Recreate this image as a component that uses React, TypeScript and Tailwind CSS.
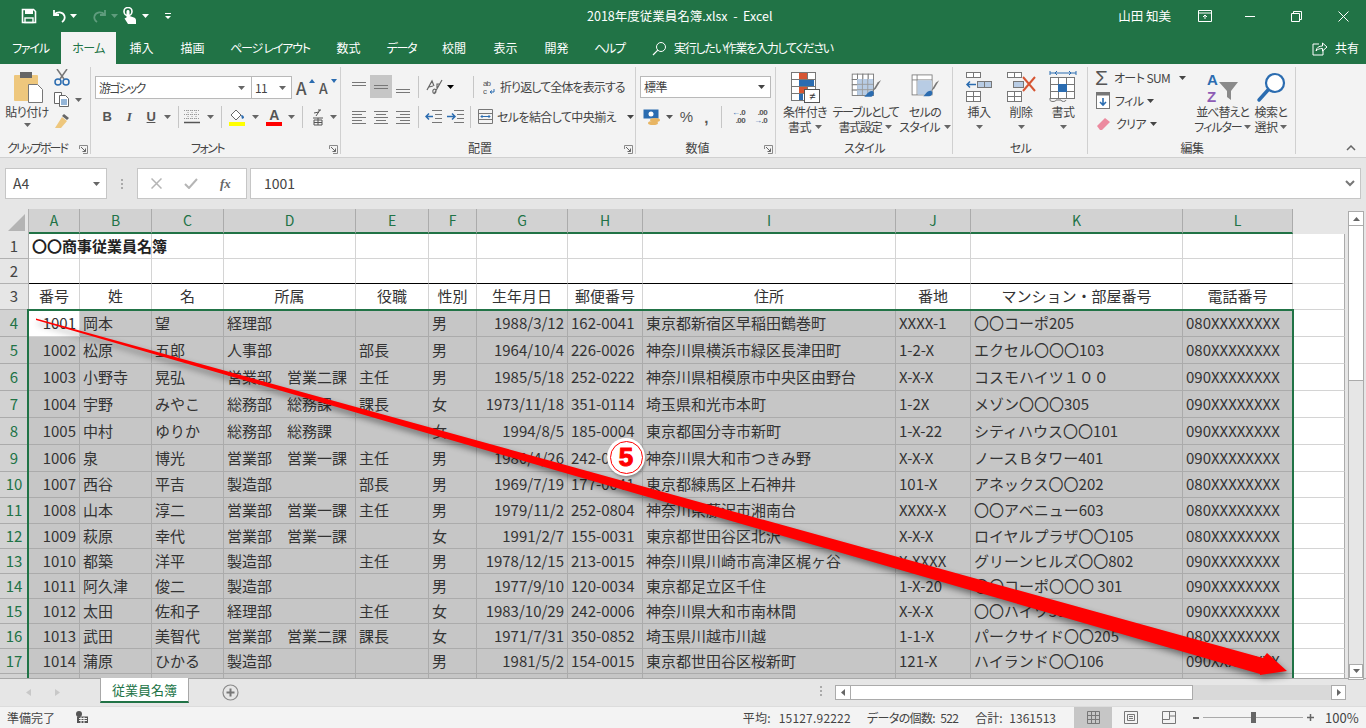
import React from 'react';

const jp = '[font-family:"Noto_Sans_CJK_JP","Noto_Sans",sans-serif]';

const columns = [
  { id: 'A', label: '番号' },
  { id: 'B', label: '姓' },
  { id: 'C', label: '名' },
  { id: 'D', label: '所属' },
  { id: 'E', label: '役職' },
  { id: 'F', label: '性別' },
  { id: 'G', label: '生年月日' },
  { id: 'H', label: '郵便番号' },
  { id: 'I', label: '住所' },
  { id: 'J', label: '番地' },
  { id: 'K', label: 'マンション・部屋番号' },
  { id: 'L', label: '電話番号' },
];

const gridCols = 'grid grid-cols-[29px_51px_72px_72px_132px_73px_48px_91px_75px_253px_75px_212px_110px_52px]';

const people = [
  ['1001', '岡本', '望', '経理部', '', '男', '1988/3/12', '162-0041', '東京都新宿区早稲田鶴巻町', 'XXXX-1', '〇〇コーポ205', '080XXXXXXXX'],
  ['1002', '松原', '五郎', '人事部', '部長', '男', '1964/10/4', '226-0026', '神奈川県横浜市緑区長津田町', '1-2-X', 'エクセル〇〇〇103', '080XXXXXXXX'],
  ['1003', '小野寺', '晃弘', '営業部　営業二課', '主任', '男', '1985/5/18', '252-0222', '神奈川県相模原市中央区由野台', 'X-X-X', 'コスモハイツ１００', '090XXXXXXXX'],
  ['1004', '宇野', 'みやこ', '総務部　総務課', '課長', '女', '1973/11/18', '351-0114', '埼玉県和光市本町', '1-2X', 'メゾン〇〇〇305', '090XXXXXXXX'],
  ['1005', '中村', 'ゆりか', '総務部　総務課', '', '女', '1994/8/5', '185-0004', '東京都国分寺市新町', '1-X-22', 'シティハウス〇〇101', '090XXXXXXXX'],
  ['1006', '泉', '博光', '営業部　営業一課', '主任', '男', '1980/4/26', '242-0002', '神奈川県大和市つきみ野', 'X-X-X', 'ノースＢタワー401', '090XXXXXXXX'],
  ['1007', '西谷', '平吉', '製造部', '部長', '男', '1969/7/19', '177-0041', '東京都練馬区上石神井', '101-X', 'アネックス〇〇202', '080XXXXXXXX'],
  ['1008', '山本', '淳二', '営業部　営業一課', '主任', '男', '1979/11/2', '252-0804', '神奈川県藤沢市湘南台', 'XXXX-X', '〇〇アベニュー603', '080XXXXXXXX'],
  ['1009', '萩原', '幸代', '営業部　営業一課', '', '女', '1991/2/7', '155-0031', '東京都世田谷区北沢', 'X-X-X', 'ロイヤルプラザ〇〇105', '080XXXXXXXX'],
  ['1010', '都築', '洋平', '製造部', '主任', '男', '1978/12/15', '213-0015', '神奈川県川崎市高津区梶ヶ谷', 'X-XXXX', 'グリーンヒルズ〇〇802', '090XXXXXXXX'],
  ['1011', '阿久津', '俊二', '製造部', '', '男', '1977/9/10', '120-0034', '東京都足立区千住', '1-X-20', '〇〇コーポ〇〇〇 301', '090XXXXXXXX'],
  ['1012', '太田', '佐和子', '経理部', '主任', '女', '1983/10/29', '242-0006', '神奈川県大和市南林間', 'X-X-X', '〇〇ハイツ305', '090XXXXXXXX'],
  ['1013', '武田', '美智代', '営業部　営業二課', '課長', '女', '1971/7/31', '350-0852', '埼玉県川越市川越', '1-1-X', 'パークサイド〇〇205', '080XXXXXXXX'],
  ['1014', '蒲原', 'ひかる', '製造部', '', '男', '1981/5/2', '154-0015', '東京都世田谷区桜新町', '121-X', 'ハイランド〇〇106', '090XXXXXXXX'],
];

const rowHeights = ['h-[27px]', 'h-[27px]', 'h-[27px]', 'h-[27px]', 'h-[27px]', 'h-[27px]', 'h-[26px]', 'h-[26px]', 'h-[25px]', 'h-[25px]', 'h-[25px]', 'h-[25px]', 'h-[25px]', 'h-[25px]'];

const tabs = [
  ['ファイル', 'w-[61px] tracking-[-1.2px]'],
  ['ホーム', 'w-[55px] tracking-[-0.6px]'],
  ['挿入', 'w-[51px]'],
  ['描画', 'w-[51px]'],
  ['ページ レイアウト', 'w-[104px] tracking-[-1.2px]'],
  ['数式', 'w-[53px]'],
  ['データ', 'w-[53px] tracking-[-1.2px]'],
  ['校閲', 'w-[52px]'],
  ['表示', 'w-[51px]'],
  ['開発', 'w-[51px]'],
  ['ヘルプ', 'w-[55px] tracking-[-1.2px]'],
];

const Caret = ({ className = 'text-[#666]' }: { className?: string }) => (
  <svg width="7" height="4" viewBox="0 0 7 4" className={`shrink-0 ${className}`}>
    <path d="M0 0h7L3.5 4z" fill="currentColor" />
  </svg>
);

const Launcher = () => (
  <svg width="9" height="9" viewBox="0 0 9 9" className="absolute right-[3px] bottom-[3px]">
    <path d="M.5 4V.5H8.5V8.5H4" fill="none" stroke="#8a8a8a" />
    <path d="M2 2l4.5 4.5M6.5 3.5v3h-3" fill="none" stroke="#666" />
  </svg>
);

type GroupProps = { width: string; label: string; labelClass?: string; launcher?: boolean; children: React.ReactNode };

const Group = ({ width, label, labelClass = '', launcher = false, children }: GroupProps) => (
  <div className={`relative shrink-0 ${width} flex flex-col`}>
    <div className="h-[75px]">{children}</div>
    <div className={`h-[18px] text-center text-[12px] leading-[18px] text-[#444] ${launcher ? 'pr-[17px]' : ''} ${labelClass}`}>{label}</div>
    {launcher && <Launcher />}
    <div className="absolute right-0 top-[3px] bottom-[3px] w-px bg-[#d0d0d0]" />
  </div>
);

const Sep = ({ className = '' }: { className?: string }) => <div className={`w-px h-[22px] bg-[#c6c6c6] shrink-0 ${className}`} />;

const Lines = ({ rows, active = false }: { rows: [number, number][]; active?: boolean }) => (
  <svg width="16" height="16" viewBox="0 0 16 16">
    {rows.map(([y, w], i) => (
      <rect key={i} x={active ? 8 - w / 2 : 1} y={y} width={w} height="1" fill="#777" />
    ))}
  </svg>
);

const CellGrid = ({ x, y, cols, rows, w, h }: { x: number; y: number; cols: number; rows: number; w: number; h: number }) => (
  <g fill="none" stroke="#777">
    {Array.from({ length: rows }).map((_, r) =>
      Array.from({ length: cols }).map((_, c) => (
        <rect key={`${r}-${c}`} x={x + c * w + 0.5} y={y + r * h + 0.5} width={w} height={h} fill="#fff" />
      ))
    )}
  </g>
);

type BigButtonProps = { width: string; lines: string[]; caretInline?: boolean; tight?: boolean; icon: React.ReactNode };

const BigButton = ({ width, lines, caretInline = true, tight = false, icon }: BigButtonProps) => (
  <div className={`${width} flex flex-col items-center shrink-0`}>
    <div className="h-[34px] mt-[6px] flex items-center justify-center">{icon}</div>
    <div className={`text-[12px] leading-[15px] text-[#444] text-center whitespace-nowrap ${tight ? 'tracking-[-1.3px]' : ''}`}>
      <div>{lines[0]}</div>
      {caretInline ? (
        <div className="flex items-center justify-center gap-[4px]">
          {lines[1]}
          <Caret />
        </div>
      ) : (
        <div className="flex justify-center h-[15px] items-center">
          <Caret />
        </div>
      )}
    </div>
  </div>
);

function TitleBar() {
  return (
    <div className="h-[32px] bg-[#217346] flex items-center text-white relative">
      <div className="flex items-center pl-[21px] gap-0">
        <svg width="16" height="16" viewBox="0 0 16 16" className="mr-[14px]">
          <path d="M1.5 1.5h11l2 2v11h-13z" fill="none" stroke="#fff" strokeWidth="1.6" />
          <rect x="4" y="2" width="8" height="4" fill="#fff" />
          <rect x="4" y="10" width="8" height="4.5" fill="none" stroke="#fff" strokeWidth="1.4" />
        </svg>
        <svg width="16" height="16" viewBox="0 0 16 16" className="mr-[3px]">
          <path d="M3 2v5h5M3.5 6.5C6 3.500 12 3.500 13.500 8c.7 2.500-.5 4.500-2.500 6" fill="none" stroke="#fff" strokeWidth="1.8" />
        </svg>
        <Caret className="text-white mr-[15px]" />
        <svg width="16" height="16" viewBox="0 0 16 16" className="mr-[3px]">
          <path d="M13 2v5H8M12.500 6.500C10 3.500 4 3.500 2.500 8c-.7 2.500.5 4.500 2.500 6" fill="none" stroke="#5f9c7d" strokeWidth="1.8" />
        </svg>
        <Caret className="text-[#5f9c7d] mr-[5px]" />
        <svg width="14" height="18" viewBox="0 0 14 18" className="mr-[5px]">
          <circle cx="5" cy="4.500" r="4" fill="none" stroke="#fff" strokeWidth="1.6" />
          <path d="M3.500 4.500c0-2 3-2 3 0v4.500l4.500 1.500c1.500.5 2 1.500 2 3V17H5L1.500 11.500 3.500 10.500z" fill="#fff" />
        </svg>
        <Caret className="text-white mr-[15px]" />
        <svg width="8" height="8" viewBox="0 0 8 8">
          <path d="M1 1h6v1H1zM1 4h6L4 7z" fill="#fff" />
        </svg>
      </div>
      <div className="absolute left-[587px] top-[7px] text-[12.5px] leading-[18px] whitespace-pre">2018年度従業員名簿.xlsx  -  Excel</div>
      <div className="ml-auto flex items-center">
        <span className="text-[12.5px] mr-[27px]">山田 知美</span>
        <svg width="14" height="12" viewBox="0 0 14 12" className="mr-[33px]">
          <path d="M.5.500h13v11H.5zM.5 3h13" fill="none" stroke="#fff" />
          <path d="M7 9V5M5 7l2-2 2 2" fill="none" stroke="#fff" />
        </svg>
        <div className="w-[10px] h-px bg-white mr-[36px]" />
        <svg width="11" height="11" viewBox="0 0 11 11" className="mr-[36px]">
          <path d="M.5 2.500h8v8h-8zM2.500 2.500v-2h8v8h-2" fill="none" stroke="#fff" />
        </svg>
        <svg width="11" height="11" viewBox="0 0 11 11" className="mr-[17px]">
          <path d="M.5.500l10 10M10.500.500l-10 10" fill="none" stroke="#fff" />
        </svg>
      </div>
    </div>
  );
}

function TabBar() {
  return (
    <div className="h-[32px] bg-[#217346] flex items-stretch text-white text-[12px] relative">
      {tabs.map(([label, width], i) => (
        <div
          key={label}
          className={`${width} shrink-0 flex items-center justify-center ${i === 1 ? 'bg-[#f3f3f3] text-[#217346]' : ''}`}
        >
          {label}
        </div>
      ))}
      <div className="flex items-center ml-[15px] gap-[7px]">
        <svg width="15" height="15" viewBox="0 0 15 15">
          <circle cx="9" cy="6" r="4.500" fill="none" stroke="#fff" />
          <path d="M5.800 9.200 1 14" stroke="#fff" strokeWidth="1.200" />
        </svg>
        <span className="tracking-[-1.25px]">実行したい作業を入力してください</span>
      </div>
      <div className="ml-auto flex items-center pr-[7px] gap-[7px]">
        <svg width="16" height="15" viewBox="0 0 16 15">
          <path d="M7 3H1v11h10V9" fill="none" stroke="#fff" />
          <path d="M4 10c.5-3.500 3-5 6.500-5V2L15 6l-4.500 4V7.500C8 7.500 5.500 8 4 10z" fill="none" stroke="#fff" />
        </svg>
        <span>共有</span>
      </div>
    </div>
  );
}

function FontGroup() {
  return (
    <div className="pl-[4px] pt-[12px]">
      <div className="flex items-center">
        <div className="w-[157px] h-[23px] bg-white border border-[#b9b9b9] flex items-center justify-between px-[3px] text-[12px] text-[#444]">
          <span className="tracking-[-1.8px]">游ゴシック</span>
          <Caret className="text-[#666] mr-[3px]" />
        </div>
        <div className="w-[40px] h-[23px] bg-white border-y border-r border-[#b9b9b9] flex items-center justify-between pl-[3px] pr-[5px] text-[12px] text-[#444]">
          11
          <Caret />
        </div>
        <div className="relative ml-[4px] w-[20px] text-[17px] leading-[20px] text-[#555] font-medium">
          A
          <svg width="6" height="4" viewBox="0 0 6 4" className="absolute right-[1px] top-[1px]"><path d="M0 4h6L3 0z" fill="#2b6cb0" /></svg>
        </div>
        <div className="relative ml-[3px] w-[18px] text-[14px] leading-[20px] text-[#555] font-medium">
          A
          <svg width="6" height="4" viewBox="0 0 6 4" className="absolute right-[0px] top-[1px]"><path d="M0 0h6L3 4z" fill="#2b6cb0" /></svg>
        </div>
      </div>
      <div className="flex items-center mt-[7px] h-[22px] text-[#555]">
        <span className="w-[22px] ml-[1px] text-center font-bold text-[13px] [font-family:'Liberation_Sans',sans-serif]">B</span>
        <span className="w-[22px] text-center italic font-bold text-[13px] [font-family:'Liberation_Serif',serif]">I</span>
        <span className="w-[22px] text-center underline font-bold text-[13px] [font-family:'Liberation_Sans',sans-serif]">U</span>
        <Caret className="ml-[2px] text-[#666]" />
        <Sep className="ml-[7px]" />
        <svg width="16" height="14" viewBox="0 0 16 14" className="ml-[5px]">
          <path d="M0 .500h16M0 4.500h16M0 8.500h16" stroke="#999" strokeDasharray="1 1" />
          <path d="M4 0v9M8 0v9M12 0v9" stroke="#999" strokeDasharray="1 1" />
          <path d="M0 12.500h16" stroke="#555" strokeWidth="1.500" />
        </svg>
        <Caret className="ml-[7px] text-[#666]" />
        <Sep className="ml-[7px]" />
        <svg width="18" height="17" viewBox="0 0 18 17" className="ml-[6px]">
          <path d="M3 6l5-5 5 5-5 5z" fill="#fff" stroke="#666" />
          <path d="M13 6c2 0 3 1 3 3l-2 1z" fill="#2b6cb0" />
          <rect x="1" y="13" width="16" height="4" fill="#ffff00" />
        </svg>
        <Caret className="ml-[6px] text-[#666]" />
        <div className="ml-[7px] w-[16px] flex flex-col items-center">
          <span className="text-[14px] leading-[13px] font-bold text-[#555] [font-family:'Liberation_Sans',sans-serif]">A</span>
          <div className="w-[16px] h-[4px] bg-[#ff0000]" />
        </div>
        <Caret className="ml-[6px] text-[#666]" />
        <Sep className="ml-[7px]" />
        <svg width="12" height="17" viewBox="0 0 12 17" className="ml-[9px]">
          <path d="M2 4l5-1M6 1l3 0M8 1L4 7" fill="none" stroke="#555" />
          <path d="M1 9h10M2 11h8v5H2zM6 9v7M2 13.500h8" fill="none" stroke="#555" />
        </svg>
        <Caret className="ml-[6px] text-[#666]" />
      </div>
    </div>
  );
}

function AlignGroup() {
  return (
    <div className="pl-[7px] pt-[11px]">
      <div className="flex items-center h-[23px]">
        <div className="w-[22px] h-[23px] flex items-center justify-center"><Lines rows={[[3, 14], [6, 14]]} /></div>
        <div className="w-[22px] h-[23px] flex items-center justify-center bg-[#c6c6c6]"><Lines rows={[[6, 14], [9, 14]]} /></div>
        <div className="w-[22px] h-[23px] flex items-center justify-center"><Lines rows={[[10, 14], [13, 14]]} /></div>
        <Sep className="ml-[4px]" />
        <svg width="18" height="18" viewBox="0 0 18 18" className="ml-[7px]">
          <path d="M1 12L6 3l2 5M3 9l4-1M7 14c-1-3 3-4 3-1s-3 3-3 1M11 10V6h3M16 2L8 16" fill="none" stroke="#666" strokeWidth="1.200" />
        </svg>
        <Caret className="ml-[3px]" />
        <Sep className="ml-[19px]" />
        <div className="flex items-center ml-[9px] gap-[2px] text-[12px] text-[#444] whitespace-nowrap tracking-[-0.9px]">
          <svg width="15" height="16" viewBox="0 0 15 16" className="shrink-0">
            <text x="0" y="7" fontSize="8" fill="#555" fontFamily="Liberation Sans">ab</text>
            <text x="0" y="15" fontSize="8" fill="#555" fontFamily="Liberation Sans">c</text>
            <path d="M11 10v3H7M9 11.500 7 13l2 1.500" fill="none" stroke="#2b6cb0" />
          </svg>
          折り返して全体を表示する
        </div>
      </div>
      <div className="flex items-center h-[23px] mt-[7px]">
        <div className="w-[22px] flex justify-center"><Lines rows={[[2, 14], [5, 10], [8, 14], [11, 10], [14, 14]]} /></div>
        <div className="w-[22px] flex justify-center"><Lines active rows={[[2, 14], [5, 10], [8, 14], [11, 10], [14, 14]]} /></div>
        <div className="w-[22px] flex justify-center">
          <svg width="16" height="16" viewBox="0 0 16 16">
            {[[2, 14], [5, 10], [8, 14], [11, 10], [14, 14]].map(([y, w]) => <rect key={y} x={15 - w} y={y} width={w} height="1" fill="#777" />)}
          </svg>
        </div>
        <Sep className="ml-[4px]" />
        <svg width="17" height="14" viewBox="0 0 17 14" className="ml-[6px]">
          <path d="M7 .500h10M10 4.500h7M10 8.500h7M7 12.500h10" stroke="#777" />
          <path d="M8 6.500H1M4 3.500l-3 3 3 3" fill="none" stroke="#2b6cb0" strokeWidth="1.500" />
        </svg>
        <svg width="17" height="14" viewBox="0 0 17 14" className="ml-[5px]">
          <path d="M7 .500h10M10 4.500h7M10 8.500h7M7 12.500h10" stroke="#777" />
          <path d="M0 6.500h7M5 3.500l3 3-3 3" fill="none" stroke="#2b6cb0" strokeWidth="1.500" />
        </svg>
        <Sep className="ml-[6px]" />
        <div className="flex items-center ml-[7px] gap-[4px] text-[12px] text-[#444] whitespace-nowrap">
          <svg width="15" height="15" viewBox="0 0 15 15" className="shrink-0">
            <path d="M.5.500h14v14H.5zM.5 4.500h14M.5 10.500h14" fill="none" stroke="#777" />
            <path d="M3 7.500h9M4.500 6 3 7.500 4.500 9M10.500 6 12 7.500 10.500 9" fill="none" stroke="#2b6cb0" />
          </svg>
          セルを結合して中央揃え
          <Caret className="ml-[7px]" />
        </div>
      </div>
    </div>
  );
}

function NumberGroup() {
  return (
    <div className="pl-[4px] pt-[12px]">
      <div className="w-[131px] h-[22px] bg-white border border-[#b9b9b9] flex items-center justify-between px-[3px] text-[12px] text-[#444]">
        標準
        <Caret className="mr-[2px]" />
      </div>
      <div className="flex items-center h-[24px] mt-[7px] text-[#555]">
        <svg width="18" height="16" viewBox="0 0 18 16" className="ml-[3px]">
          <rect x=".5" y=".5" width="15" height="9" fill="#2b6cb0" />
          <circle cx="8" cy="5" r="2.500" fill="#fff" />
          <ellipse cx="12" cy="11" rx="5" ry="2" fill="#e8b563" />
          <ellipse cx="10" cy="14" rx="5" ry="2" fill="#e8b563" />
        </svg>
        <Caret className="ml-[5px]" />
        <span className="ml-[5px] w-[16px] text-[15px] font-medium text-center [font-family:'Liberation_Sans',sans-serif]">%</span>
        <span className="ml-[8px] w-[8px] text-[15px] font-bold leading-[15px] text-center [font-family:'Liberation_Sans',sans-serif]">,</span>
        <Sep className="ml-[11px]" />
        <div className="ml-[7px] w-[16px] text-[8px] leading-[8px] font-bold [font-family:'Liberation_Sans',sans-serif] text-right">
          <div><span className="text-[#2b6cb0]">←</span>.0</div>
          <div>.00</div>
        </div>
        <div className="ml-[6px] w-[16px] text-[8px] leading-[8px] font-bold [font-family:'Liberation_Sans',sans-serif] text-right">
          <div>.00</div>
          <div><span className="text-[#2b6cb0]">→</span>.0</div>
        </div>
      </div>
    </div>
  );
}

const Brush = ({ color }: { color: string }) => (
  <g>
    <path d="M31 12l4-3-6 10-4 3z" fill="#777" />
    <path d="M18 26c3-4 6-5 8-4 2 2 0 6-3 6h-7z" fill={color} />
  </g>
);

const CondIcon = (
  <svg width="30" height="32" viewBox="0 0 30 32">
    <CellGrid x={1} y={1} cols={3} rows={4} w={8} h={7} />
    <rect x="9" y="2" width="8" height="6" fill="#d65532" />
    <rect x="9" y="9" width="15" height="6" fill="#2b6cb0" />
    <rect x="9" y="16" width="8" height="6" fill="#d65532" />
    <rect x="9" y="23" width="4" height="6" fill="#2b6cb0" />
    <rect x="14.500" y="18.500" width="15" height="13" fill="#fff" stroke="#555" />
    <text x="22" y="29" fontSize="11" textAnchor="middle" fill="#333" fontFamily="Liberation Sans">≠</text>
  </svg>
);

const TableIcon = (
  <svg width="32" height="34" viewBox="0 0 36 34">
    <CellGrid x={2} y={2} cols={4} rows={4} w={6} h={6} />
    <rect x="8" y="8" width="18" height="18" fill="#b8cce4" />
    <path d="M8 14h18M8 20h18M14 8v18M20 8v18" stroke="#9a9a9a" />
    <Brush color="#2b6cb0" />
  </svg>
);

const StyleIcon = (
  <svg width="30" height="34" viewBox="0 0 36 34">
    <rect x="2.500" y="2.500" width="24" height="24" fill="#fff" stroke="#777" />
    <path d="M8.500 2.500v24M2.500 8.500h24" stroke="#777" />
    <rect x="9" y="9" width="17" height="17" fill="#b8cce4" />
    <Brush color="#2b6cb0" />
  </svg>
);

const InsertIcon = (
  <svg width="28" height="32" viewBox="0 0 28 32">
    <CellGrid x={1} y={1} cols={2} rows={1} w={7} h={5} />
    <rect x="12.500" y="10.500" width="7" height="6" fill="#b8cce4" stroke="#777" />
    <rect x="19.500" y="10.500" width="7" height="6" fill="#b8cce4" stroke="#777" />
    <path d="M11 13.500H2M5 10.500l-3 3 3 3" fill="none" stroke="#2b6cb0" strokeWidth="1.500" />
    <CellGrid x={1} y={20} cols={2} rows={2} w={7} h={5} />
  </svg>
);

const DeleteIcon = (
  <svg width="30" height="32" viewBox="0 0 30 32">
    <CellGrid x={1} y={1} cols={2} rows={1} w={7} h={5} />
    <rect x="7.500" y="10.500" width="10" height="6" fill="#b8cce4" stroke="#777" />
    <CellGrid x={1} y={20} cols={2} rows={2} w={7} h={5} />
    <path d="M17 6l12 14M29 6L17 20" stroke="#d65532" strokeWidth="2" />
  </svg>
);

const FormatIcon = (
  <svg width="28" height="34" viewBox="0 0 28 34">
    <path d="M1 3h26M1 1v4M27 1v4M6 3l2-2M6 3l2 2M22 3l-2-2M22 3l-2 2" fill="none" stroke="#2b6cb0" />
    <CellGrid x={1} y={7} cols={3} rows={3} w={8} h={7} />
    <rect x="9" y="14" width="9" height="8" fill="#2b6cb0" />
    <path d="M1 28v2c0 2 6 2 6 0l5 0c0 2 5 2 5 0" fill="none" stroke="#777" />
  </svg>
);

function EditGroup() {
  const small = 'flex items-center text-[12px] text-[#444] whitespace-nowrap';
  return (
    <div className="flex pt-[4px]">
      <div className="w-[106px] pl-[7px] flex flex-col gap-[4px]">
        <div className={`${small} h-[19px]`}>
          <span className="text-[21px] leading-[19px] w-[18px] text-[#555] [font-family:'Liberation_Sans',sans-serif]">Σ</span>
          <span className="ml-[1px]">オート SUM</span>
          <Caret className="ml-[9px]" />
        </div>
        <div className={`${small} h-[19px]`}>
          <svg width="14" height="17" viewBox="0 0 14 17" className="mr-[5px] ml-[1px]">
            <rect x=".5" y=".5" width="13" height="16" fill="#fff" stroke="#777" />
            <rect x=".5" y=".5" width="13" height="3" fill="#777" />
            <path d="M7 6v7M4 10l3 3 3-3" fill="none" stroke="#2b6cb0" strokeWidth="1.600" />
          </svg>
          フィル
          <Caret className="ml-[4px]" />
        </div>
        <div className={`${small} h-[19px]`}>
          <svg width="15" height="14" viewBox="0 0 15 14" className="mr-[5px] ml-[1px]">
            <path d="M1 9l8-8 5 4-8 8H4z" fill="#ec8a9f" />
          </svg>
          クリア
          <Caret className="ml-[4px]" />
        </div>
      </div>
      <div className="w-[57px] flex flex-col items-center">
        <svg width="32" height="33" viewBox="0 0 32 33" className="mt-[3px]">
          <text x="0" y="14" fontSize="15" fontWeight="bold" fill="#2b6cb0" fontFamily="Liberation Sans">A</text>
          <text x="0" y="31" fontSize="15" fontWeight="bold" fill="#8e5bb5" fontFamily="Liberation Sans">Z</text>
          <path d="M12 11h19l-7 9v9l-4-3v-6z" fill="#8a8a8a" />
        </svg>
        <div className="text-[12px] leading-[15px] text-[#444] text-center whitespace-nowrap tracking-[-1px]">
          <div>並べ替えと</div>
          <div className="flex items-center gap-[2px]">フィルター<Caret /></div>
        </div>
      </div>
      <div className="w-[30px] ml-[5px] flex flex-col items-center">
        <svg width="30" height="33" viewBox="0 0 30 33" className="mt-[3px]">
          <circle cx="19" cy="12" r="9" fill="#fff" stroke="#2b6cb0" strokeWidth="2.200" />
          <path d="M12 19 3 29" stroke="#2b6cb0" strokeWidth="3.500" strokeLinecap="round" />
        </svg>
        <div className="text-[12px] leading-[15px] text-[#444] text-center whitespace-nowrap">
          <div>検索と</div>
          <div className="flex items-center justify-center gap-[3px]">選択<Caret /></div>
        </div>
      </div>
    </div>
  );
}

function Ribbon() {
  return (
    <div className="h-[94px] bg-[#f3f3f3] border-b border-[#d0d0d0] flex relative tracking-[-0.6px]">
      <Group width="w-[91px]" label="クリップボード" labelClass="tracking-[-2px]" launcher>
        <div className="flex">
          <div className="w-[54px] flex flex-col items-center pt-[8px]">
            <svg width="29" height="31" viewBox="0 0 29 31" className="ml-[3px]">
              <rect x="0" y="3" width="24" height="26" rx="1" fill="#eec77d" />
              <rect x="6" y="0" width="12" height="6" fill="#666" />
              <path d="M14.500 12.500h9l5 5v13h-14z" fill="#fff" stroke="#777" />
            </svg>
            <div className="text-[12px] leading-[15px] mt-[1px] text-[#444]">貼り付け</div>
            <div className="h-[12px] flex items-center"><Caret /></div>
          </div>
          <div className="flex flex-col items-start pt-[5px] gap-[6px]">
            <svg width="16" height="17" viewBox="0 0 16 17">
              <path d="M3 0l7 10M13 0 6 10" stroke="#777" strokeWidth="1.500" />
              <circle cx="4" cy="13" r="3" fill="none" stroke="#2b6cb0" strokeWidth="1.500" />
              <circle cx="12" cy="13" r="3" fill="none" stroke="#2b6cb0" strokeWidth="1.500" />
            </svg>
            <div className="flex items-center gap-[6px]">
              <svg width="15" height="15" viewBox="0 0 15 15">
                <path d="M.5.500h7v11h-7z" fill="#fff" stroke="#666" />
                <path d="M5.500 3.500h6l3 3v8h-9z" fill="#fff" stroke="#666" />
                <path d="M7 8h6M7 10h6M7 12h6" stroke="#2b6cb0" />
              </svg>
              <Caret />
            </div>
            <svg width="16" height="15" viewBox="0 0 16 15">
              <path d="M10 1l5 4-2 2-5-4z" fill="#666" />
              <path d="M8 4l5 4-6 7H1z" fill="#eec77d" />
            </svg>
          </div>
        </div>
      </Group>
      <Group width="w-[250px]" label="フォント" labelClass="tracking-[-1.5px]" launcher><FontGroup /></Group>
      <Group width="w-[295px]" label="配置" labelClass="tracking-normal" launcher><AlignGroup /></Group>
      <Group width="w-[140px]" label="数値" labelClass="tracking-normal" launcher><NumberGroup /></Group>
      <Group width="w-[177px]" label="スタイル">
        <div className="flex">
          <BigButton width="w-[58px]" lines={['条件付き', '書式']} icon={CondIcon} />
          <BigButton width="w-[63px]" lines={['テーブルとして', '書式設定']} tight icon={TableIcon} />
          <BigButton width="w-[56px]" lines={['セルの', 'スタイル']} icon={StyleIcon} />
        </div>
      </Group>
      <Group width="w-[135px]" label="セル">
        <div className="flex pl-[5px]">
          <BigButton width="w-[42px]" lines={['挿入']} caretInline={false} icon={InsertIcon} />
          <BigButton width="w-[42px]" lines={['削除']} caretInline={false} icon={DeleteIcon} />
          <BigButton width="w-[42px]" lines={['書式']} caretInline={false} icon={FormatIcon} />
        </div>
      </Group>
      <Group width="w-[208px]" label="編集"><EditGroup /></Group>
      <svg width="10" height="6" viewBox="0 0 10 6" className="absolute right-[10px] bottom-[6px]">
        <path d="M1 5l4-4 4 4" fill="none" stroke="#666" strokeWidth="1.500" />
      </svg>
    </div>
  );
}

function FormulaBar() {
  return (
    <div className="h-[51px] bg-[#e6e6e6] flex items-start pt-[10px] pl-[5px] pr-[5px] text-[#444]">
      <div className="w-[102px] h-[31px] bg-white border border-[#c6c6c6] flex items-center justify-between pl-[7px] pr-[6px] text-[14px]">
        A4
        <Caret />
      </div>
      <div className="w-[30px] h-[31px] flex flex-col items-center justify-center gap-[2px]">
        <i className="w-[2px] h-[2px] bg-[#aaa]" />
        <i className="w-[2px] h-[2px] bg-[#aaa]" />
        <i className="w-[2px] h-[2px] bg-[#aaa]" />
      </div>
      <div className="w-[110px] h-[31px] bg-white border border-[#c6c6c6] flex items-center pl-[13px]">
        <svg width="11" height="11" viewBox="0 0 11 11">
          <path d="M.5.500l10 10M10.500.500l-10 10" stroke="#b5b5b5" strokeWidth="1.500" />
        </svg>
        <svg width="14" height="11" viewBox="0 0 14 11" className="ml-[22px]">
          <path d="M1 6l4 4 8-9" fill="none" stroke="#b5b5b5" strokeWidth="2" />
        </svg>
        <span className="ml-[22px] italic font-bold text-[13px] text-[#666] [font-family:'Liberation_Serif',serif]">fx</span>
      </div>
      <div className="ml-[3px] w-[1111px] h-[31px] bg-white border border-[#c6c6c6] flex items-center justify-between pl-[13px] pr-[5px] text-[14px]">
        1001
        <svg width="10" height="7" viewBox="0 0 10 7">
          <path d="M1 1l4 4 4-4" fill="none" stroke="#777" strokeWidth="2" />
        </svg>
      </div>
    </div>
  );
}

const Cell = ({ className, children }: { className: string; children?: React.ReactNode }) => (
  <div className={`flex items-center min-w-0 whitespace-nowrap overflow-hidden border-r ${className}`}>{children}</div>
);

const isNumberCol = (i: number) => i === 0 || i === 6;

function Sheet() {
  return (
    <div className="flex h-[469px] bg-[#e6e6e6]">
      <div className="relative w-[1345px] h-full overflow-hidden text-[15px] text-[#333] [font-feature-settings:normal]">
        {/* column headers */}
        <div className={`${gridCols} h-[25px]`}>
          <div className="bg-[#e6e6e6] border-r border-[#b1b1b1] flex items-end justify-end pr-[3px] pb-[3px]">
            <svg width="17" height="17" viewBox="0 0 17 17"><path d="M17 0v17H0z" fill="#b4b4b4" /></svg>
          </div>
          {columns.map((col) => (
            <div key={col.id} className="bg-[#d2d2d2] border-r border-[#ababab] border-b-2 border-b-[#217346] text-[#217346] text-[14px] flex items-center justify-center">
              {col.id}
            </div>
          ))}
        </div>

        {/* rows 1-3 */}
        {[1, 2, 3].map((n) => (
          <div key={n} className={`${gridCols} ${n === 3 ? 'h-[26px]' : 'h-[25px]'} bg-white`}>
            <Cell className="bg-[#e6e6e6] border-[#b1b1b1] border-b justify-center text-[#444]">{n}</Cell>
            {columns.map((col, i) => (
              <Cell
                key={col.id}
                className={`border-[#d4d4d4] ${n === 2 ? 'border-b border-b-black' : 'border-b'} ${n === 3 ? 'justify-center' : 'pl-[3px]'} ${n === 1 && i === 0 ? 'overflow-visible! font-bold text-[#222]' : ''}`}
              >
                {n === 1 && i === 0 ? '〇〇商事従業員名簿' : n === 3 ? col.label : ''}
              </Cell>
            ))}
            <div className="border-b border-[#d4d4d4] border-r border-r-[#ababab]" />
          </div>
        ))}

        {/* selected rows */}
        {people.map((row, r) => (
          <div key={row[0]} className={`${gridCols} ${rowHeights[r]}`}>
            <Cell className="bg-[#d2d2d2] border-[#ababab] border-b justify-center text-[#217346]">{r + 4}</Cell>
            {row.map((value, i) => (
              <Cell
                key={i}
                className={`${r === 0 && i === 0 ? 'bg-white border-b border-[#d4d4d4]' : 'bg-[#c6c6c6] border-b border-[#ababab]'} ${isNumberCol(i) ? 'justify-end pr-[3px]' : 'pl-[3px]'}`}
              >
                {value}
              </Cell>
            ))}
            <div className="bg-white border-b border-r border-[#d4d4d4] border-r-[#ababab]" />
          </div>
        ))}
        <div className={`${gridCols} h-[4px]`}>
          <div className="bg-[#d2d2d2] border-r border-[#ababab]" />
          {columns.map((col) => (
            <div key={col.id} className="bg-[#c6c6c6] border-r border-[#ababab]" />
          ))}
          <div className="bg-white border-r border-[#ababab]" />
        </div>

        {/* selection outline */}
        <div className="absolute left-[27px] top-[100px] w-[1267px] bottom-0 border-x-2 border-t-2 border-[#217346] pointer-events-none" />
      </div>
      <div className="ml-[3px] w-[16px] h-full flex flex-col border border-[#ababab] border-t-[#ababab] bg-white mt-[2px]">
        <div className="h-[14px] bg-white flex items-center justify-center border-b border-[#ababab]">
          <svg width="7" height="4" viewBox="0 0 7 4"><path d="M0 4h7L3.500 0z" fill="#666" /></svg>
        </div>
        <div className="h-[155px] bg-white border-b border-[#ababab]" />
        <div className="flex-1 bg-[#e6e6e6]" />
        <div className="h-[14px] mb-[1px] bg-white flex items-center justify-center border border-[#ababab]">
          <svg width="7" height="4" viewBox="0 0 7 4"><path d="M0 0h7L3.500 4z" fill="#666" /></svg>
        </div>
      </div>
    </div>
  );
}

function SheetTabs() {
  return (
    <div className="h-[28px] bg-[#e6e6e6] border-t border-[#a8a8a8] flex items-start">
      <div className="flex items-center h-[26px] pl-[26px] gap-[24px]">
        <svg width="5" height="7" viewBox="0 0 5 7"><path d="M5 0v7L0 3.500z" fill="#c8c8c8" /></svg>
        <svg width="5" height="7" viewBox="0 0 5 7"><path d="M0 0v7l5-3.500z" fill="#c8c8c8" /></svg>
      </div>
      <div className="ml-[40px] -mt-px w-[89px] h-[25px] bg-white border-x border-[#a8a8a8] border-b-2 border-b-[#217346] text-[#217346] text-[13px] flex items-center justify-center">
        従業員名簿
      </div>
      <svg width="17" height="17" viewBox="0 0 17 17" className="ml-[33px] mt-[5px]">
        <circle cx="8.500" cy="8.500" r="7.500" fill="none" stroke="#8a8a8a" strokeWidth="1.200" />
        <path d="M8.500 4.500v8M4.500 8.500h8" stroke="#777" strokeWidth="2" />
      </svg>
      <div className="ml-[581px] mt-[7px] flex flex-col gap-[2px]">
        <i className="w-[2px] h-[2px] bg-[#aaa]" />
        <i className="w-[2px] h-[2px] bg-[#aaa]" />
        <i className="w-[2px] h-[2px] bg-[#aaa]" />
      </div>
      <div className="ml-[13px] mt-[6px] w-[511px] h-[15px] flex bg-[#d9d9d9]">
        <div className="w-[16px] h-[15px] bg-white border border-[#ababab] flex items-center justify-center">
          <svg width="4" height="7" viewBox="0 0 4 7"><path d="M4 0v7L0 3.500z" fill="#666" /></svg>
        </div>
        <div className="w-[342px] h-[15px] bg-white border border-[#ababab] border-l-0" />
        <div className="flex-1" />
        <div className="w-[15px] h-[15px] bg-white border border-[#ababab] flex items-center justify-center">
          <svg width="4" height="7" viewBox="0 0 4 7"><path d="M0 0v7l4-3.500z" fill="#666" /></svg>
        </div>
      </div>
    </div>
  );
}

function StatusBar() {
  return (
    <div className="h-[22px] bg-[#f3f3f3] border-t border-[#dcdcdc] flex items-center text-[12px] text-[#444]">
      <span className="ml-[7px]">準備完了</span>
      <svg width="13" height="13" viewBox="0 0 13 13" className="ml-[21px]">
        <circle cx="3" cy="3" r="3" fill="#555" />
        <path d="M1 5.500h11V12H1z" fill="#555" />
        <path d="M3 7.500h8M3 9.500h8M5 6v6M8 6v6" stroke="#f3f3f3" />
      </svg>
      <span className="ml-auto tracking-[0.2px] [word-spacing:5px]">平均: 15127.92222</span>
      <span className="ml-[16px] [word-spacing:3px] tracking-[-0.6px]">データの個数: 522</span>
      <span className="ml-[17px] [word-spacing:4px]">合計: 1361513</span>
      <div className="ml-[18px] w-[38px] h-[21px] bg-[#c6c6c6] flex items-center justify-center">
        <svg width="13" height="13" viewBox="0 0 13 13"><path d="M.5.500h12v12H.5zM4.500.500v12M8.500.500v12M.5 4.500h12M.5 8.500h12" fill="none" stroke="#777" /></svg>
      </div>
      <svg width="14" height="13" viewBox="0 0 14 13" className="ml-[12px]"><path d="M.5.500h13v12H.5zM3.500 3.500h7v6h-7zM5 5.500h4M5 7.500h4" fill="none" stroke="#777" /></svg>
      <svg width="14" height="13" viewBox="0 0 14 13" className="ml-[24px]"><path d="M.5 12.500V.500h13v12zM.5 8.500h7V.500M7.500 5h6" fill="none" stroke="#777" /></svg>
      <div className="ml-[17px] w-[6px] h-[2px] bg-[#666]" />
      <div className="relative ml-[4px] w-[100px] h-px bg-[#aaa]">
        <div className="absolute left-[48px] -top-[5px] w-[5px] h-[11px] bg-[#666]" />
      </div>
      <svg width="7" height="7" viewBox="0 0 7 7" className="ml-[4px]"><path d="M3.500 0v7M0 3.500h7" stroke="#666" strokeWidth="1.500" /></svg>
      <span className="ml-[11px] mr-[8px] w-[33px] text-[13px]">100%</span>
    </div>
  );
}

export default function App() {
  return (
    <div className={`relative w-[1366px] h-[728px] overflow-hidden bg-[#f3f3f3] ${jp} [font-feature-settings:"palt"]`}>
      <TitleBar />
      <TabBar />
      <Ribbon />
      <FormulaBar />
      <Sheet />
      <SheetTabs />
      <StatusBar />

      {/* annotation over the sheet */}
      <svg width="1366" height="728" viewBox="0 0 1366 728" className="absolute inset-0 pointer-events-none drop-shadow-[2px_4px_3px_rgba(0,0,0,0.45)]">
        <path d="M36 318.500 1263 658 1267 653 1287 671 1260 675 1260 674 36 320z" fill="#ff0000" />
      </svg>
      <div className="absolute left-[607px] top-[438px] w-[38px] h-[38px] rounded-full bg-white flex items-center justify-center shadow-[1px_2px_3px_rgba(0,0,0,0.3)]">
        <div className="w-[33px] h-[33px] rounded-full border-[1.5px] border-[#ff0000] flex items-center justify-center text-[#ff0000] text-[26px] font-bold leading-none [-webkit-text-stroke:1px_#ff0000] [font-family:'Liberation_Sans',sans-serif]">
          5
        </div>
      </div>
    </div>
  );
}
